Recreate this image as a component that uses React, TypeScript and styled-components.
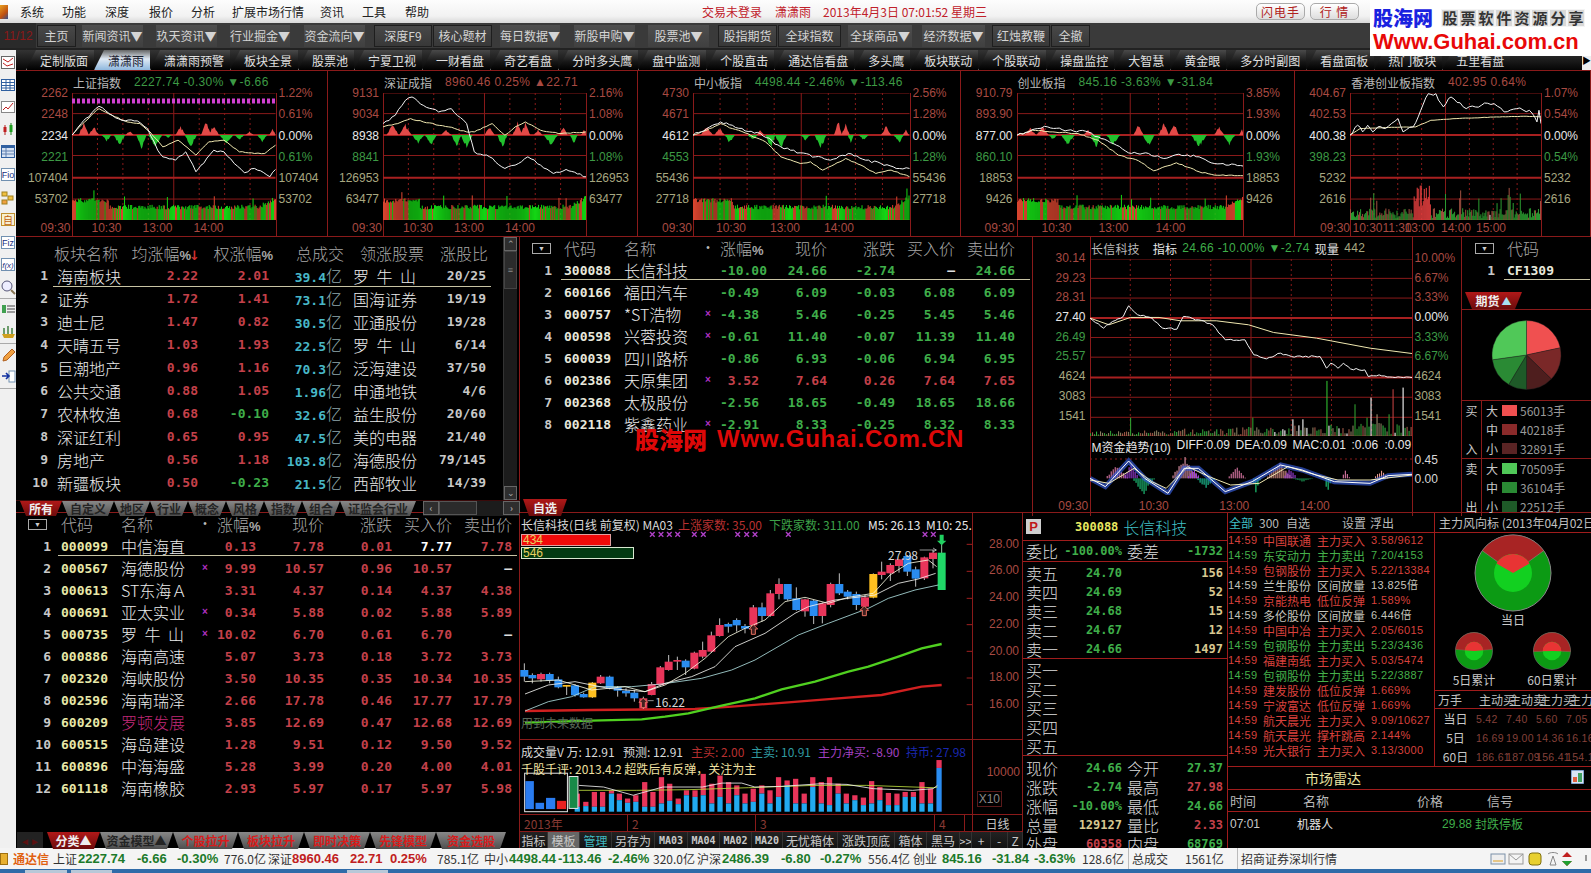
import React from 'react';
import styled, { createGlobalStyle } from 'styled-components';

const SANS = `"Liberation Sans","Noto Sans CJK SC",sans-serif`;
const MONO = `"DejaVu Sans Mono","Noto Sans CJK SC",monospace`;
const CJK = `"Noto Sans CJK SC","Liberation Sans",sans-serif`;
const LINE = '#8a1a1a';
const RED = '#c4404a';
const GREEN = '#3fae4a';
const DIMRED = '#a84a42';
const BEIGE = '#a8a880';

type P = [number, number];

function rng(seed: number) {
  let s = seed >>> 0;
  return () => {
    s = (s + 0x6d2b79f5) >>> 0;
    let t = Math.imul(s ^ (s >>> 15), 1 | s);
    t = (t + Math.imul(t ^ (t >>> 7), 61 | t)) ^ t;
    return ((t ^ (t >>> 14)) >>> 0) / 4294967296;
  };
}
const jag = (pts: P[], seed: number, amp: number, step = 6): P[] => {
  const r = rng(seed);
  const out: P[] = [];
  for (let i = 0; i < pts.length - 1; i++) {
    const [x0, y0] = pts[i];
    const [x1, y1] = pts[i + 1];
    const n = Math.max(1, Math.round((x1 - x0) / step));
    for (let k = 0; k < n; k++) {
      const t = k / n;
      out.push([x0 + (x1 - x0) * t, y0 + (y1 - y0) * t + (k ? (r() - 0.5) * amp : 0)]);
    }
  }
  out.push(pts[pts.length - 1]);
  return out;
};
const ptStr = (pts: P[]) => pts.map(p => `${p[0].toFixed(1)},${p[1].toFixed(1)}`).join(' ');
const polar = (cx: number, cy: number, r: number, a: number): P => {
  const t = ((a - 90) * Math.PI) / 180;
  return [cx + r * Math.cos(t), cy + r * Math.sin(t)];
};
const sector = (cx: number, cy: number, r: number, a0: number, a1: number) => {
  const [x0, y0] = polar(cx, cy, r, a0);
  const [x1, y1] = polar(cx, cy, r, a1);
  return `M${cx} ${cy}L${x0.toFixed(2)} ${y0.toFixed(2)}A${r} ${r} 0 ${a1 - a0 > 180 ? 1 : 0} 1 ${x1.toFixed(2)} ${y1.toFixed(2)}Z`;
};

const Global = createGlobalStyle`
  html, body { margin: 0; padding: 0; background: #000; }
  body { font-family: ${SANS}; overflow: hidden; }
  * { box-sizing: border-box; }
`;

const Root = styled.div`
  position: relative;
  width: 1591px;
  height: 873px;
  overflow: hidden;
  display: flex;
  flex-direction: column;
  background: #000;
`;

/* ---------- top bars ---------- */
const MenuBar = styled.div`
  height: 23px;
  display: flex;
  align-items: center;
  background: linear-gradient(#fdfdfd, #f2f2f2 70%, #d8d8d8);
  font-family: ${CJK};
  font-size: 12px;
  color: #222;
`;
const MenuLogo = styled.span`
  width: 8px;
  height: 14px;
  margin-right: 12px;
  background: linear-gradient(135deg, #e8a020, #c05010 60%, #305090);
`;
const MenuItem = styled.span<{ $w: number }>`
  width: ${p => p.$w}px;
  flex: none;
  white-space: nowrap;
`;
const MenuInfo = styled.span<{ $w: number }>`
  width: ${p => p.$w}px;
  flex: none;
  color: #c0202a;
  white-space: nowrap;
`;
const MenuButton = styled.span`
  width: 49px;
  height: 17px;
  margin-right: 5px;
  flex: none;
  display: flex;
  align-items: center;
  justify-content: center;
  letter-spacing: 1px;
  color: #b02020;
  background: linear-gradient(#fff, #ddd);
  border: 1px solid #aaa;
  border-radius: 5px;
  font-size: 12px;
`;

const ToolBar = styled.div`
  height: 27px;
  display: flex;
  align-items: center;
  background: #3a3a3a;
  border-bottom: 2px solid #222;
  font-family: ${CJK};
  font-size: 12px;
`;
const Pager = styled.span`
  width: 36px;
  height: 25px;
  flex: none;
  display: flex;
  align-items: center;
  justify-content: center;
  background: #2a2a2a;
  color: #8c1818;
  font-family: ${SANS};
`;
const ToolButton = styled.span<{ $w: number; $ml: number; $box?: boolean }>`
  width: ${p => p.$w}px;
  margin-left: ${p => p.$ml}px;
  height: 22px;
  flex: none;
  display: flex;
  align-items: center;
  justify-content: center;
  white-space: nowrap;
  color: #d4d4d4;
  background: ${p => (p.$box ? 'linear-gradient(#484848,#383838)' : 'linear-gradient(#4e4e4e,#404040)')};
  border: ${p => (p.$box ? '1px solid #1e1e1e' : '0')};
`;

const Body = styled.div`
  flex: 1;
  min-height: 0;
  display: flex;
`;
const SideBar = styled.div`
  width: 16px;
  flex: none;
  padding-top: 1px;
  display: flex;
  flex-direction: column;
  overflow: hidden;
  background: #f0f0f0;
`;
const SideIcon = styled.div<{ $rule?: boolean }>`
  height: 22.55px;
  flex: none;
  display: flex;
  align-items: center;
  justify-content: flex-end;
  border-bottom: ${p => (p.$rule ? '1px solid #aaa' : '0')};
`;
const Content = styled.div`
  flex: 1;
  min-width: 0;
  display: flex;
  flex-direction: column;
`;
const TabBar = styled.div`
  height: 21px;
  flex: none;
  display: flex;
  align-items: stretch;
  background: linear-gradient(#333, #050505);
  border-bottom: 1px solid ${LINE};
  font-family: ${CJK};
  font-size: 12px;
  padding-left: 10px;
`;
const ViewTab = styled.span<{ $on?: boolean }>`
  flex: none;
  display: flex;
  align-items: center;
  padding: 0 6px 0 13px;
  white-space: nowrap;
  color: ${p => (p.$on ? '#1a2030' : '#e0e0e0')};
  background: ${p =>
    p.$on ? 'linear-gradient(#666,#dfe9f4 45%,#8fb8de)' : 'linear-gradient(#4a4a4a,#161616 60%,#000)'};
  clip-path: polygon(10px 0, 100% 0, 100% 100%, 0 100%);
  border-left: 1px solid #999;
`;
const TabArrow = styled.span`
  margin-left: auto;
  width: 9px;
  background: #eee;
  color: #000;
  font-size: 9px;
  display: flex;
  align-items: center;
  justify-content: center;
`;

/* ---------- index charts ---------- */
const IndexRow = styled.div`
  height: 166px;
  flex: none;
  display: grid;
  grid-template-columns: 311.5px 310.5px 323px 333.5px 296.5px;
  border-bottom: 1px solid ${LINE};
`;
const IndexPanel = styled.div<{ $l: number; $w: number; $r: number }>`
  display: grid;
  grid-template-columns: ${p => p.$l}px ${p => p.$w}px ${p => p.$r}px;
  grid-template-rows: 22px 127px 1fr;
  border-right: 1px solid ${LINE};
  background:
    linear-gradient(${LINE}, ${LINE}) ${p => p.$l}px 22px / 1px 100% no-repeat,
    linear-gradient(${LINE}, ${LINE}) ${p => p.$l + p.$w}px 22px / 1px 100% no-repeat;
`;
const IndexTitle = styled.div<{ $l: number }>`
  grid-column: 1 / 4;
  padding-left: ${p => p.$l + 1}px;
  display: flex;
  align-items: center;
  gap: 13px;
  white-space: nowrap;
  overflow: hidden;
  font-size: 12px;
`;
const TitleName = styled.span`
  color: #b8b8b8;
  font-family: ${CJK};
`;
const TitleQuote = styled.span<{ $c: string }>`
  color: ${p => p.$c};
  letter-spacing: 0.35px;
`;
const Axis = styled.div<{ $right?: boolean; $h: number; $mt: number }>`
  display: flex;
  flex-direction: column;
  margin-top: ${p => p.$mt}px;
  align-items: ${p => (p.$right ? 'flex-start' : 'flex-end')};
  padding: ${p => (p.$right ? '0 0 0 3px' : '0 4px 0 0')};
  & > span { height: ${p => p.$h}px; line-height: ${p => p.$h}px; }
`;
const Tick = styled.span<{ $c: string }>`
  flex: none;
  font-size: 12px;
  color: ${p => p.$c};
  white-space: nowrap;
`;
const PlotSvg = styled.svg`
  display: block;
  width: 100%;
  height: 100%;
  overflow: hidden;
`;
const TimeRow = styled.div<{ $pl: number }>`
  grid-column: 1 / 4;
  padding-left: ${p => p.$pl}px;
  display: flex;
  align-items: center;
`;
const TimeCell = styled.span<{ $w: number }>`
  width: ${p => p.$w}px;
  flex: none;
  text-align: center;
  white-space: nowrap;
  color: ${DIMRED};
  font-size: 12px;
`;

/* ---------- middle row ---------- */
const MidRow = styled.div`
  height: 276px;
  flex: none;
  display: grid;
  grid-template-columns: 504px 513px 429px 129px;
  border-bottom: 1px solid ${LINE};
`;
const BottomRow = styled.div`
  flex: 1;
  min-height: 0;
  display: grid;
  grid-template-columns: 504px 503px 205px 363px;
`;
const SectorPanel = styled.div`
  display: grid;
  grid-template-columns: 487px 14px 3px;
  grid-template-rows: 1fr 16px;
  border-right: 1px solid ${LINE};
`;
const SectorBody = styled.div`
  padding-top: 5px;
  overflow: hidden;
`;
const sectorCols = '32px 9px 71px 70px 71px 73px 11px 77px 56px';
const SectorRowBox = styled.div<{ $sel?: boolean; $h: number }>`
  display: grid;
  grid-template-columns: ${sectorCols};
  height: ${p => p.$h}px;
  align-items: center;
  position: relative;
  &::after {
    content: '';
    display: ${p => (p.$sel ? 'block' : 'none')};
    position: absolute;
    left: 37px;
    right: 12px;
    bottom: 0;
    height: 1px;
    background: #c8c4a4;
  }
`;
const Head = styled.span<{ $left?: boolean; $span?: number; $mr?: number; $pl?: number }>`
  grid-column: span ${p => p.$span || 1};
  margin-right: ${p => p.$mr || 0}px;
  padding-left: ${p => p.$pl || 0}px;
  font-family: ${CJK};
  font-size: 16px;
  font-weight: 300;
  line-height: 1;
  color: #a8a8a8;
  text-align: ${p => (p.$left ? 'left' : 'right')};
  white-space: nowrap;
`;
const Pct = styled.span`
  font-family: ${SANS};
  font-size: 13px;
  font-weight: 700;
`;
const SortArrow = styled.span`
  font-family: "DejaVu Sans", sans-serif;
  font-size: 13px;
  font-weight: 700;
  margin-left: -2px;
  color: #d03030;
`;
const Rank = styled.span`
  font-family: ${MONO};
  font-size: 13px;
  font-weight: 700;
  line-height: 1;
  color: #c8c8c8;
  text-align: right;
`;
const Name = styled.span<{ $c?: string }>`
  font-family: ${CJK};
  font-size: 16px;
  font-weight: 300;
  line-height: 1;
  word-spacing: 4px;
  color: ${p => p.$c || '#ececec'};
  white-space: nowrap;
`;
const Num = styled.span<{ $c: string }>`
  font-family: ${MONO};
  font-size: 13px;
  font-weight: 700;
  line-height: 1;
  color: ${p => p.$c};
  text-align: right;
  white-space: nowrap;
`;
const Yi = styled.span`
  font-family: ${CJK};
  font-size: 16px;
  font-weight: 300;
  line-height: 1;
  color: #8fa8ac;
`;
const Code = styled.span<{ $c: string }>`
  font-family: ${MONO};
  font-size: 13px;
  font-weight: 700;
  line-height: 1;
  color: ${p => p.$c};
`;
const Mark = styled.span`
  font-size: 10px;
  line-height: 1;
  color: #b030c0;
  text-align: center;
  font-weight: 700;
`;
const VScroll = styled.div`
  display: flex;
  flex-direction: column;
  background: #1c1c1c;
  border-left: 1px solid #333;
`;
const ScrollBtn = styled.span<{ $w?: number; $flex?: boolean }>`
  height: 14px;
  width: ${p => (p.$w ? `${p.$w}px` : '100%')};
  flex: none;
  display: flex;
  align-items: center;
  justify-content: center;
  background: #2e2e2e;
  border: 1px solid #666;
  color: #aaa;
  font-size: 9px;
`;
const VThumb = styled.span`
  height: 38px;
  flex: none;
  background: #2b2b2b;
  border: 1px solid #444;
  color: #888;
  font-size: 9px;
  display: flex;
  align-items: center;
  justify-content: center;
`;
const PanelTabs = styled.div<{ $pl: number }>`
  grid-column: 1 / 4;
  height: 16px;
  padding-left: ${p => p.$pl}px;
  display: flex;
  align-items: stretch;
  border-top: 1px solid #3a0a0a;
  font-family: ${CJK};
  font-size: 12px;
  font-weight: 700;
`;
const PanelTab = styled.span<{ $w: number; $kind?: 'on' | 'gray' | 'redtext' }>`
  width: ${p => p.$w}px;
  flex: none;
  display: flex;
  align-items: center;
  justify-content: center;
  white-space: nowrap;
  line-height: 1;
  clip-path: polygon(0 0, 100% 0, calc(100% - 6px) 100%, 6px 100%);
  color: ${p => (p.$kind === 'on' ? '#eee' : p.$kind === 'redtext' ? '#d81c1c' : '#242424')};
  background: ${p =>
    p.$kind === 'on' ? 'linear-gradient(#b01818,#6c0c0c)' : 'linear-gradient(#888,#4e4e4e)'};
`;
const HScroll = styled.div`
  margin-left: auto;
  width: 97px;
  display: flex;
  background: #1c1c1c;
`;
const HTrack = styled.span`
  flex: 1;
  display: flex;
`;
const HThumb = styled.span`
  width: 38px;
  height: 14px;
  background: #2b2b2b;
  border: 1px solid #555;
`;

const ListPanel = styled.div`
  display: flex;
  flex-direction: column;
  min-height: 0;
  border-right: 1px solid ${LINE};
`;
const StockGrid = styled.div<{ $rank: number; $gap: number; $sel?: boolean; $line: number }>`
  display: grid;
  grid-template-columns: ${p => p.$rank}px ${p => p.$gap}px 60px 72px 24px 39px 68px 68px 60px 60px;
  height: 22px;
  flex: none;
  align-items: center;
  position: relative;
  &::after {
    content: '';
    display: ${p => (p.$sel ? 'block' : 'none')};
    position: absolute;
    left: ${p => p.$line}px;
    right: 2px;
    bottom: 1px;
    height: 1px;
    background: #c8c4a4;
  }
`;
const DropCell = styled.span<{ $pr: number }>`
  display: flex;
  justify-content: flex-end;
  padding-right: ${p => p.$pr}px;
`;
const DropBtn = styled.span`
  width: 19px;
  height: 11px;
  border: 1px solid #aaa;
  display: flex;
  align-items: center;
  justify-content: center;
  color: #ccc;
  font-size: 7px;
  line-height: 1;
`;
const Dot = styled.span`
  color: #bbb;
  font-size: 10px;
  line-height: 1;
  text-align: center;
`;
const Grow = styled.div`
  flex: 1;
`;
const ListTabs = styled.div<{ $pl: number }>`
  height: 17px;
  flex: none;
  padding-left: ${p => p.$pl}px;
  display: flex;
  align-items: stretch;
  font-family: ${CJK};
  font-size: 12px;
  font-weight: 700;
`;
const NavBtns = styled.span`
  width: 26px;
  margin-right: 4px;
  display: flex;
  align-items: center;
  justify-content: center;
  color: #5a1010;
  font-size: 10px;
  background: #222;
`;

/* ---------- day chart (right of the middle row) ---------- */
const MinutePanel = styled.div`
  display: grid;
  grid-template-columns: 56.5px 322px 1fr;
  grid-template-rows: 22px 177px 59px 1fr;
  border-right: 1px solid ${LINE};
  background:
    linear-gradient(${LINE}, ${LINE}) 56.5px 0 / 1px 100% no-repeat,
    linear-gradient(${LINE}, ${LINE}) 378.5px 0 / 1px 100% no-repeat;
`;
const MinuteHead = styled.div`
  grid-column: 1 / 4;
  padding-left: 58px;
  display: flex;
  align-items: center;
  gap: 5px;
  font-size: 12px;
  white-space: nowrap;
  letter-spacing: 0.2px;
`;
const HeadTag = styled.span<{ $c: string; $ml?: number }>`
  color: ${p => p.$c};
  margin-left: ${p => p.$ml || 0}px;
  font-family: ${CJK};
`;
const MacdCell = styled.div`
  position: relative;
`;
const MacdLabel = styled.div`
  position: absolute;
  left: 2px;
  top: 2px;
  right: 0;
  display: flex;
  color: #e8e8e8;
  font-size: 12px;
  white-space: nowrap;
  overflow: hidden;
`;
const MacdItem = styled.span<{ $w: number }>`
  width: ${p => p.$w}px;
  flex: none;
`;
const FuturesPanel = styled.div`
  display: flex;
  flex-direction: column;
`;
const FutHead = styled.div`
  height: 22px;
  flex: none;
  display: grid;
  grid-template-columns: 33px 12px 1fr;
  align-items: center;
`;
const FutRow = styled.div`
  height: 22px;
  flex: none;
  display: grid;
  grid-template-columns: 33px 12px 1fr;
  align-items: center;
  position: relative;
  &::after {
    content: '';
    position: absolute;
    left: 42px;
    right: 1px;
    bottom: 1px;
    height: 1px;
    background: #c8c4a4;
  }
`;
const FutTabRow = styled.div`
  margin-top: 11px;
  height: 18px;
  flex: none;
  padding-left: 3px;
  display: flex;
  border-bottom: 1px solid ${LINE};
`;
const FutTab = styled.span`
  width: 57px;
  display: flex;
  align-items: center;
  justify-content: center;
  gap: 2px;
  font-family: ${CJK};
  font-size: 12px;
  font-weight: 700;
  color: #eee;
  background: linear-gradient(#b01818, #6c0c0c);
  clip-path: polygon(0 0, 100% 0, calc(100% - 7px) 100%, 7px 100%);
`;
const TriUp = styled.span`
  color: #a8e0f0;
  font-size: 10px;
`;
const PieBox = styled.svg`
  display: block;
  flex: none;
  width: 128px;
  height: 90px;
`;
const Legend = styled.div`
  flex: 1;
  display: grid;
  grid-template-columns: 20px 1fr;
  grid-template-rows: 57px 1fr;
  border-top: 1px solid ${LINE};
`;
const LegendSide = styled.div<{ $top?: boolean }>`
  border-right: 1px solid ${LINE};
  border-top: ${p => (p.$top ? `1px solid ${LINE}` : '0')};
  display: flex;
  flex-direction: column;
  justify-content: space-between;
  align-items: center;
  padding: 1px 0;
  font-family: ${CJK};
  font-size: 12px;
  color: #c8c8c8;
`;
const LegendRows = styled.div<{ $top?: boolean }>`
  border-top: ${p => (p.$top ? `1px solid ${LINE}` : '0')};
  display: flex;
  flex-direction: column;
  justify-content: space-around;
`;
const LegendRow = styled.div`
  display: flex;
  align-items: center;
  height: 19px;
  font-family: ${CJK};
  font-size: 12px;
  color: #c8c8c8;
  white-space: nowrap;
`;
const LegendKey = styled.span`
  width: 20px;
  text-align: center;
`;
const Swatch = styled.span<{ $c: string }>`
  width: 15px;
  height: 11px;
  margin-right: 3px;
  background: ${p => p.$c};
  flex: none;
`;
const LegendVal = styled.span`
  color: #999;
`;

/* ---------- k-line ---------- */
const KPanel = styled.div`
  display: grid;
  grid-template-columns: 452px 1fr;
  grid-template-rows: 226px 75px 17px 1fr;
  border-right: 1px solid ${LINE};
`;
const KCell = styled.div<{ $line?: boolean }>`
  position: relative;
  min-width: 0;
  overflow: hidden;
  border-top: ${p => (p.$line ? `1px solid ${LINE}` : '0')};
`;
const SideCell = styled.div<{ $line?: boolean }>`
  border-left: 1px solid ${LINE};
  border-top: ${p => (p.$line ? `1px solid ${LINE}` : '0')};
  overflow: hidden;
`;
const KHead = styled.div`
  position: absolute;
  left: 1px;
  top: 1px;
  right: 0;
  height: 20px;
  display: flex;
  align-items: center;
  overflow: hidden;
  font-size: 12px;
  white-space: nowrap;
`;
const KHeadItem = styled.span<{ $w?: number; $c: string }>`
  flex: none;
  width: ${p => (p.$w ? `${p.$w}px` : 'auto')};
  color: ${p => p.$c};
  font-family: ${CJK};
  font-size: 12px;
`;
const Meter = styled.div<{ $w: number; $bg: string; $c: string; $top: number }>`
  position: absolute;
  left: 1px;
  top: ${p => p.$top}px;
  width: ${p => p.$w}px;
  height: 12px;
  border: 1px solid ${p => p.$c};
  background: ${p => p.$bg};
  color: #e8d060;
  font-size: 12px;
  line-height: 11px;
  padding-left: 1px;
`;
const ChartNote = styled.span<{ $l: number; $t: number; $c: string }>`
  position: absolute;
  left: ${p => p.$l}px;
  top: ${p => p.$t}px;
  color: ${p => p.$c};
  font-size: 12px;
  font-family: ${CJK};
  white-space: nowrap;
`;
const PriceAxis = styled.div`
  padding-top: 17.5px;
  display: flex;
  flex-direction: column;
  align-items: flex-end;
  padding-right: 3px;
  & > span { height: 26.8px; line-height: 26.8px; }
`;
const VolAxis = styled.div`
  position: relative;
  padding: 25px 2px 0 0;
  display: flex;
  flex-direction: column;
  align-items: flex-end;
`;
const X10 = styled.span`
  margin-top: 12px;
  margin-right: 18px;
  border: 1px solid #5a1a1a;
  padding: 0 1px;
  color: #888;
  font-size: 12px;
`;
const DateCell = styled.div`
  grid-column: 1 / 2;
  display: flex;
  align-items: center;
  border-top: 1px solid ${LINE};
  color: #8a3a34;
  font-size: 13px;
`;
const DateItem = styled.span<{ $w: number }>`
  width: ${p => p.$w}px;
  flex: none;
  padding-left: 4px;
  border-right: 1px solid ${LINE};
  font-family: ${CJK};
  font-size: 12px;
  height: 100%;
  display: flex;
  align-items: center;
`;
const DayTag = styled.div`
  border-left: 1px solid ${LINE};
  border-top: 1px solid ${LINE};
  display: flex;
  align-items: center;
  justify-content: center;
  color: #c8c8c8;
  font-family: ${CJK};
  font-size: 12px;
`;
const KButtons = styled.div`
  grid-column: 1 / 3;
  display: flex;
  border-top: 1px solid ${LINE};
`;
const KButton = styled.span<{ $w: number; $kind?: 'on' | 'cyan' | 'ma' }>`
  width: ${p => p.$w}px;
  flex: none;
  display: flex;
  align-items: center;
  justify-content: center;
  white-space: nowrap;
  overflow: hidden;
  border-right: 1px solid #333;
  font-family: ${p => (p.$kind === 'ma' ? MONO : CJK)};
  font-size: ${p => (p.$kind === 'ma' ? '10px' : '12px')};
  font-weight: ${p => (p.$kind === 'ma' ? 700 : 400)};
  color: ${p => (p.$kind === 'cyan' ? '#40b8c0' : '#c8c8c8')};
  background: ${p => (p.$kind === 'on' ? '#666' : 'linear-gradient(#222,#111)')};
`;

/* ---------- quote ---------- */
const QuotePanel = styled.div`
  display: flex;
  flex-direction: column;
  overflow: hidden;
  border-right: 1px solid #a01c1c;
`;
const QuoteTop = styled.div`
  height: 28px;
  flex: none;
  padding-left: 3px;
  display: flex;
  align-items: center;
  border-bottom: 1px solid #a01c1c;
`;
const PBadge = styled.span`
  width: 15px;
  height: 15px;
  margin-right: 34px;
  background: #cfcfcf;
  color: #c01818;
  font-weight: 700;
  font-size: 13px;
  display: flex;
  align-items: center;
  justify-content: center;
`;
const QuoteName = styled.span`
  margin-left: 5px;
  color: #40c0c8;
  font-family: ${CJK};
  font-size: 16px;
  font-weight: 300;
`;
const QuoteGroup = styled.div<{ $h?: number; $line?: boolean; $pt?: number }>`
  flex: none;
  padding-top: ${p => p.$pt || 0}px;
  height: ${p => (p.$h ? `${p.$h}px` : 'auto')};
  border-bottom: ${p => (p.$line ? '1px solid #a01c1c' : '0')};
`;
const QuoteRow = styled.div<{ $h?: number }>`
  height: ${p => p.$h || 19}px;
  padding-left: 3px;
  display: grid;
  grid-template-columns: 96px 96px;
  column-gap: 5px;
  align-items: center;
`;
const QuoteCell = styled.span`
  display: flex;
  justify-content: space-between;
  align-items: center;
  white-space: nowrap;
`;
const QuoteValue = styled.span<{ $c: string }>`
  font-family: ${MONO};
  font-size: 12px;
  font-weight: 700;
  line-height: 1;
  color: ${p => p.$c};
`;
const QuoteLabel = styled.span`
  font-family: ${CJK};
  font-size: 16px;
  font-weight: 300;
  line-height: 1;
  color: #dedede;
`;

/* ---------- right block ---------- */
const RightBlock = styled.div`
  display: grid;
  grid-template-columns: 207px 156px;
  grid-template-rows: 254px 1fr;
  min-height: 0;
`;
const TickerPanel = styled.div`
  border-right: 1px solid #a01c1c;
  border-bottom: 1px solid #a01c1c;
  overflow: hidden;
`;
const TickerHead = styled.div`
  height: 20px;
  display: flex;
  align-items: center;
  border-bottom: 1px solid #a01c1c;
  padding-left: 1px;
  font-family: ${CJK};
  font-size: 12px;
  color: #b8b8b8;
`;
const HeadItem = styled.span<{ $w: number; $c?: string }>`
  width: ${p => p.$w}px;
  flex: none;
  color: ${p => p.$c || 'inherit'};
`;
const TickerRow = styled.div<{ $c: string }>`
  height: 15px;
  display: grid;
  grid-template-columns: 35px 54px 54px 1fr;
  align-items: center;
  color: ${p => p.$c};
  font-size: 12px;
  white-space: nowrap;
  overflow: hidden;
`;
const TickNum = styled.span`
  font-size: 11px;
  line-height: 15px;
  letter-spacing: 0.4px;
  font-family: ${SANS};
`;
const TickName = styled.span`
  font-family: ${CJK};
  font-size: 12px;
  line-height: 15px;
`;
const WindPanel = styled.div`
  border-bottom: 1px solid #a01c1c;
  display: flex;
  flex-direction: column;
  overflow: hidden;
`;
const WindTitle = styled.div`
  height: 20px;
  flex: none;
  border-bottom: 1px solid #a01c1c;
  padding-left: 4px;
  font-family: ${CJK};
  font-size: 12px;
  color: #c0c0c0;
  white-space: nowrap;
  overflow: hidden;
  display: flex;
  align-items: center;
`;
const GaugeBig = styled.svg`
  display: block;
  flex: none;
  width: 78px;
  height: 78px;
  margin: 1px auto 0;
`;
const GaugeLabel = styled.div`
  height: 16px;
  flex: none;
  font-family: ${CJK};
  font-size: 12px;
  color: #c8c8c8;
  text-align: center;
  line-height: 16px;
`;
const SmallGauges = styled.div`
  margin-top: 4px;
  flex: none;
  display: grid;
  grid-template-columns: 78px 78px;
  row-gap: 2px;
`;
const GaugeSmall = styled.svg`
  display: block;
  width: 38px;
  height: 38px;
  margin: 0 auto;
`;
const FlowHead = styled.div`
  margin-top: 2px;
  height: 19px;
  flex: none;
  border-top: 1px solid #a01c1c;
  border-bottom: 1px solid #a01c1c;
  display: grid;
  grid-template-columns: 41px 30px 30px 30px 25px;
  align-items: center;
  padding-left: 3px;
  font-family: ${CJK};
  font-size: 12px;
  line-height: 1;
  color: #c0c0c0;
  white-space: nowrap;
  overflow: hidden;
`;
const FlowRow = styled.div`
  height: 19px;
  flex: none;
  display: grid;
  grid-template-columns: 41px 30px 30px 30px 25px;
  align-items: center;
  white-space: nowrap;
  overflow: hidden;
`;
const FlowLabel = styled.span`
  font-family: ${CJK};
  font-size: 12px;
  line-height: 1;
  color: #c8c8c8;
  text-align: center;
`;
const FlowNum = styled.span`
  font-size: 10.5px;
  letter-spacing: 0.3px;
  color: #84403a;
`;
const RadarPanel = styled.div`
  grid-column: 1 / 3;
  display: flex;
  flex-direction: column;
  overflow: hidden;
`;
const RadarTitle = styled.div`
  height: 23px;
  flex: none;
  position: relative;
  padding-left: 77px;
  display: flex;
  align-items: center;
  border-bottom: 1px solid #a01c1c;
  color: #e8e0a0;
  font-family: ${CJK};
  font-size: 14px;
`;
const RadarIcon = styled.svg`
  position: absolute;
  right: 7px;
  top: 3px;
  width: 13px;
  height: 14px;
`;
const RadarHead = styled.div`
  height: 22px;
  flex: none;
  display: flex;
  align-items: center;
  border-bottom: 1px solid #a01c1c;
  font-family: ${CJK};
  font-size: 13px;
  color: #b8b8b8;
  padding-left: 2px;
`;
const RadarRow = styled.div`
  height: 24px;
  flex: none;
  display: flex;
  align-items: center;
  padding-left: 2px;
  font-size: 12px;
  white-space: nowrap;
`;

/* ---------- status ---------- */
const StatusBar = styled.div`
  height: 21px;
  flex: none;
  display: flex;
  align-items: center;
  background: #f4f4f4;
  font-size: 13px;
  color: #333;
`;
const StatusItem = styled.span<{ $w: number; $kind?: string; $sep?: boolean }>`
  width: ${p => p.$w}px;
  flex: none;
  white-space: nowrap;
  height: 100%;
  display: flex;
  align-items: center;
  overflow: hidden;
  font-family: ${CJK};
  font-size: 12px;
  border-left: ${p => (p.$sep ? '1px solid #bbb' : '0')};
  padding-left: ${p => (p.$sep ? '3px' : '0')};
  ${p =>
    p.$kind === 'g' || p.$kind === 'r'
      ? `font-family:${SANS};font-weight:700;font-size:13px;color:${p.$kind === 'g' ? '#1c7a2a' : '#c02020'};`
      : ''}
  ${p => (p.$kind === 'brand' ? 'font-weight:700;font-size:12px;color:#e06010;' : '')}
`;
const StatusIcon = styled.span`
  width: 8px;
  height: 12px;
  margin-right: 5px;
  flex: none;
  background: #e8b030;
  border: 1px solid #a07010;
`;
const StatusTray = styled.svg`
  flex: none;
  width: 101px;
  height: 18px;
  margin-left: auto;
`;
const TaskStrip = styled.div`
  height: 4px;
  flex: none;
  display: flex;
  align-items: flex-end;
  background: #2f6ba8;
`;
const TaskItem = styled.span<{ $w: number; $ml: number }>`
  width: ${p => p.$w}px;
  margin-left: ${p => p.$ml}px;
  height: 3px;
  flex: none;
  background: #b8c8d8;
`;

/* ---------- overlays ---------- */
const Watermark = styled.div`
  position: absolute;
  left: 635px;
  top: 424px;
  display: flex;
  align-items: center;
  gap: 10px;
  color: #dd0808;
  font-weight: 700;
  font-size: 24px;
  letter-spacing: 0.75px;
  white-space: nowrap;
  font-family: ${SANS};
  line-height: 30px;
`;
const WaterCn = styled.span`
  font-family: ${CJK};
  font-weight: 900;
  letter-spacing: 0;
`;
const LogoBox = styled.div`
  position: absolute;
  right: 0;
  top: 0;
  width: 221px;
  height: 56px;
  padding: 5px 0 0 3px;
  background: #fff;
  display: flex;
  flex-direction: column;
`;
const LogoTop = styled.div`
  display: flex;
  align-items: center;
  gap: 8px;
  height: 25px;
`;
const LogoName = styled.span`
  color: #1a22e0;
  font-family: ${CJK};
  font-weight: 900;
  font-size: 20px;
  line-height: 24px;
`;
const LogoTags = styled.span`
  display: flex;
`;
const LogoTag = styled.span`
  width: 18px;
  height: 18px;
  background: #d8d8d8;
  border: 1px solid #f4f4f4;
  color: #333;
  font-family: ${CJK};
  font-weight: 700;
  font-size: 15px;
  line-height: 1;
  display: flex;
  align-items: center;
  justify-content: center;
`;
const LogoUrl = styled.span`
  color: #e80808;
  font-weight: 700;
  font-size: 22px;
  line-height: 24px;
  white-space: nowrap;
`;

/* ---------- data ---------- */
const ICOL = { up: '#a84a42', mid: '#e8e8e8', down: '#3d9a45', vol: BEIGE };

type Bump = [number, number, number];
type IndexCfg = {
  title: string; quote: string; qc: string; left: string[]; right: string[];
  vb: [number, number]; cols: [number, number, number]; tp: number; tw: number;
  times?: [string, number][]; bumps: Bump[]; a: P[]; b: P[]; seed: number; sparse?: boolean;
};
const t4 = (w: number): [string, number][] => ['09:30', '10:30', '13:00', '14:00'].map(t => [t, w] as [string, number]);

const indices: IndexCfg[] = [
  {
    title: '上证指数', quote: '2227.74 -0.30% ▼-6.66', qc: '#3d9a45',
    left: ['2262', '2248', '2234', '2221', '107404', '53702'], right: ['1.22%', '0.61%', '0.00%', '0.61%', '107404', '53702'],
    vb: [142, 399], cols: [56, 203.5, 51], tp: 14, tw: 51, seed: 11,
    bumps: [[165, 10, 35], [185, 10, 25], [210, 10, -20], [235, 12, -30], [255, 8, 12], [278, 10, -40], [305, 14, -35], [330, 8, -10], [355, 10, 25], [375, 12, -35], [405, 10, 40], [420, 10, 30], [445, 14, -25], [470, 10, -15], [490, 8, 10], [515, 10, -20], [535, 6, 20]],
    a: [[142, 405], [160, 370], [175, 350], [195, 318], [215, 340], [240, 360], [270, 362], [290, 385], [310, 450], [320, 470], [345, 480], [365, 455], [385, 515], [400, 490], [420, 450], [440, 455], [460, 490], [480, 518], [500, 505], [530, 530], [541, 508]],
    b: [[142, 405], [160, 375], [180, 345], [195, 325], [220, 345], [250, 365], [275, 370], [295, 395], [320, 440], [350, 420], [385, 465], [410, 425], [440, 420], [470, 455], [500, 460], [520, 460], [541, 435]],
  },
  {
    title: '深证成指', quote: '8960.46 0.25% ▲22.71', qc: '#a84a42',
    left: ['9131', '9034', '8938', '8841', '126953', '63477'], right: ['2.16%', '1.08%', '0.00%', '1.08%', '126953', '63477'],
    vb: [751, 398], cols: [55.5, 203, 51], tp: 14, tw: 51, seed: 22,
    bumps: [[770, 12, 30], [795, 12, 30], [820, 12, -25], [845, 12, -30], [875, 10, 15], [895, 10, -35], [915, 12, -40], [960, 10, 25], [985, 10, -40], [1015, 10, 40], [1030, 10, 35], [1055, 8, 15], [1080, 14, -30], [1105, 8, 25], [1125, 8, -25], [1145, 6, 15]],
    a: [[751, 370], [775, 345], [795, 300], [808, 290], [830, 315], [860, 335], [885, 325], [915, 370], [930, 455], [960, 470], [990, 505], [1010, 495], [1035, 470], [1060, 495], [1085, 520], [1110, 508], [1149, 530]],
    b: [[751, 380], [780, 370], [805, 355], [830, 365], [880, 380], [915, 395], [930, 395], [965, 370], [990, 405], [1010, 380], [1030, 365], [1060, 390], [1100, 400], [1149, 395]],
  },
  {
    title: '中小板指', quote: '4498.44 -2.46% ▼-113.46', qc: '#3d9a45',
    left: ['4730', '4671', '4612', '4553', '55436', '27718'], right: ['2.56%', '1.28%', '0.00%', '1.28%', '55436', '27718'],
    vb: [1358, 424], cols: [55, 216.5, 50.5], tp: 12, tw: 54, seed: 33,
    bumps: [[1385, 12, 25], [1410, 10, 20], [1430, 10, -25], [1475, 10, -15], [1490, 8, 15], [1510, 10, -40], [1530, 12, -40], [1578, 10, -15], [1608, 12, -40], [1642, 8, 45], [1657, 8, 35], [1667, 6, -25], [1692, 10, -15], [1736, 10, 25], [1761, 10, -25], [1775, 6, 15]],
    a: [[1358, 405], [1385, 385], [1412, 365], [1435, 375], [1460, 392], [1490, 400], [1530, 440], [1568, 458], [1598, 470], [1627, 480], [1662, 460], [1696, 480], [1726, 490], [1756, 505], [1782, 505]],
    b: [[1358, 405], [1385, 390], [1412, 370], [1435, 385], [1460, 398], [1500, 425], [1530, 470], [1568, 490], [1588, 485], [1612, 510], [1657, 475], [1687, 495], [1716, 520], [1746, 510], [1782, 530]],
  },
  {
    title: '创业板指', quote: '845.16 -3.63% ▼-31.84', qc: '#3d9a45',
    left: ['910.79', '893.90', '877.00', '860.10', '18853', '9426'], right: ['3.85%', '1.93%', '0.00%', '1.93%', '18853', '9426'],
    vb: [429, 449], cols: [55.5, 226.5, 51], tp: 10, tw: 57, seed: 44,
    bumps: [[455, 12, 20], [480, 12, 25], [500, 8, -15], [530, 14, -30], [570, 10, 15], [585, 10, -40], [620, 14, -30], [670, 10, 30], [690, 12, -35], [720, 10, 35], [740, 10, 35], [790, 16, -35], [830, 10, 25], [850, 12, -30], [875, 6, 15]],
    a: [[429, 405], [470, 385], [490, 380], [530, 390], [570, 395], [590, 410], [620, 430], [650, 458], [690, 460], [720, 475], [750, 462], [790, 470], [820, 490], [878, 498]],
    b: [[429, 405], [460, 390], [500, 395], [550, 400], [590, 420], [630, 465], [670, 482], [700, 512], [745, 488], [790, 515], [820, 525], [878, 527]],
  },
  {
    title: '香港创业板指数', quote: '402.95 0.64%', qc: '#a84a42',
    left: ['404.67', '402.53', '400.38', '398.23', '5232', '2616'], right: ['1.07%', '0.54%', '0.00%', '0.54%', '5232', '2616'],
    vb: [1090, 378], cols: [55.5, 191, 50], tp: 23, tw: 35, seed: 55, sparse: true,
    times: [['09:30', 35], ['10:30', 30], ['11:30', 18], ['13:00', 38], ['14:00', 35], ['15:00', 35]],
    bumps: [],
    a: [[1090, 405], [1105, 375], [1115, 395], [1125, 375], [1135, 395], [1145, 380], [1160, 385], [1185, 355], [1195, 395], [1215, 380], [1230, 330], [1245, 280], [1260, 280], [1275, 320], [1290, 290], [1320, 325], [1350, 315], [1375, 310], [1395, 335], [1420, 325], [1445, 330], [1460, 365], [1464, 330], [1468, 370]],
    b: [[1090, 405], [1110, 385], [1160, 382], [1220, 380], [1250, 360], [1300, 355], [1380, 350], [1440, 348], [1468, 350]],
  },
];

const IndexPlot: React.FC<{ c: IndexCfg }> = ({ c }) => {
  const [x0, w] = c.vb;
  const r = rng(c.seed);
  const ys = [278, 340, 404, 466, 533, 597, 660];
  const vols: React.ReactNode[] = [];
  let green = false;
  for (let x = x0, i = 0; x < x0 + w; x += 2, i++) {
    const t = (x - x0) / w;
    if (r() < 0.18) green = !green;
    let h: number;
    let col: string;
    if (c.sparse) {
      h = 6 + r() * 30;
      if (r() < 0.06) h = 50 + r() * 50;
      if (t > 0.33 && t < 0.42) { h = 40 + r() * 70; col = '#e84040'; } else col = r() < 0.6 ? '#2a9a30' : r() < 0.8 ? '#a05040' : t > 0.4 && r() < 0.3 ? '#e8e8e8' : '#2a9a30';
    } else {
      h = 32 + r() * 14 + (t < 0.18 ? 20 : 0) + (t > 0.92 ? 30 * ((t - 0.92) / 0.08) : 0);
      if (r() < 0.02) h += 30;
      const reddish = t < 0.18 ? 0.75 : t > 0.9 ? 0.7 : 0.28;
      col = (green ? r() > reddish + 0.2 : r() < reddish + 0.15) ? '#d8452f' : '#14d414';
      if (green && t > 0.25 && t < 0.9) col = '#14d414';
    }
    vols.push(<rect key={i} x={x} y={660 - h} width={2} height={h} fill={col} />);
  }
  const bumpPolys = c.bumps.map((b, i) => {
    const [cx, hw, h] = b;
    const pts: P[] = [[cx - hw, 404]];
    for (let k = -hw + 2; k < hw; k += 2) {
      const e = 1 - Math.abs(k) / hw;
      pts.push([cx + k, 404 - h * e * (0.7 + r() * 0.45)]);
    }
    pts.push([cx + hw, 404]);
    return <polygon key={i} points={ptStr(pts)} fill={h > 0 ? '#e24a48' : '#22c02e'} />;
  });
  return (
    <PlotSvg viewBox={`${x0} 278 ${w} 382`} preserveAspectRatio="none">
      {[1, 2, 3, 5, 6, 7].map(k => (
        <line key={k} x1={x0 + (w * k) / 8} x2={x0 + (w * k) / 8} y1={278} y2={660} stroke={LINE} strokeDasharray="2 3" vectorEffect="non-scaling-stroke" />
      ))}
      <line x1={x0 + w / 2} x2={x0 + w / 2} y1={278} y2={660} stroke={LINE} vectorEffect="non-scaling-stroke" />
      {ys.map((y, i) => (
        <line key={y} x1={x0} x2={x0 + w} y1={y} y2={y} stroke={i === 2 || i === 4 ? '#a82020' : LINE} strokeWidth={i === 2 || i === 4 ? 2 : 1} vectorEffect="non-scaling-stroke" />
      ))}
      {bumpPolys}
      {c.seed === 11 && (
        <line x1={142} x2={541} y1={302} y2={302} stroke="#d040d0" strokeWidth={5} strokeDasharray="3 2" vectorEffect="non-scaling-stroke" />
      )}
      {vols}
      <polyline points={ptStr(jag(c.b, c.seed + 1, c.sparse ? 1 : 3))} fill="none" stroke="#f0e8b0" vectorEffect="non-scaling-stroke" />
      <polyline points={ptStr(jag(c.a, c.seed + 2, c.sparse ? 12 : 7))} fill="none" stroke="#f4f4f4" vectorEffect="non-scaling-stroke" />
    </PlotSvg>
  );
};

const tickColor = (i: number) => (i < 2 ? ICOL.up : i === 2 ? ICOL.mid : i === 3 ? ICOL.down : ICOL.vol);

const IndexCard: React.FC<{ c: IndexCfg }> = ({ c }) => (
  <IndexPanel $l={c.cols[0]} $w={c.cols[1]} $r={c.cols[2]}>
    <IndexTitle $l={c.cols[0]}>
      <TitleName>{c.title}</TitleName>
      <TitleQuote $c={c.qc}>{c.quote}</TitleQuote>
    </IndexTitle>
    <Axis $h={21.3} $mt={-10}>
      {c.left.map((t, i) => <Tick key={i} $c={tickColor(i)}>{t}</Tick>)}
    </Axis>
    <IndexPlot c={c} />
    <Axis $right $h={21.3} $mt={-10}>
      {c.right.map((t, i) => <Tick key={i} $c={tickColor(i)}>{t}</Tick>)}
    </Axis>
    <TimeRow $pl={c.tp}>
      {(c.times || t4(c.tw)).map(([t, w]) => <TimeCell key={t} $w={w}>{t}</TimeCell>)}
    </TimeRow>
  </IndexPanel>
);

const sectors = [
  ['海南板块', '2.22', '2.01', '39.4', '罗 牛 山', '20/25'],
  ['证券', '1.72', '1.41', '73.1', '国海证券', '19/19'],
  ['迪士尼', '1.47', '0.82', '30.5', '亚通股份', '19/28'],
  ['天晴五号', '1.03', '1.93', '22.5', '罗 牛 山', '6/14'],
  ['巨潮地产', '0.96', '1.16', '70.3', '泛海建设', '37/50'],
  ['公共交通', '0.88', '1.05', '1.96', '申通地铁', '4/6'],
  ['农林牧渔', '0.68', '-0.10', '32.6', '益生股份', '20/60'],
  ['深证红利', '0.65', '0.95', '47.5', '美的电器', '21/40'],
  ['房地产', '0.56', '1.18', '103.8', '海德股份', '79/145'],
  ['新疆板块', '0.50', '-0.23', '21.5', '西部牧业', '14/39'],
];
const signColor = (s: string) => (s.startsWith('-') ? GREEN : RED);

type Stock = [string, string, boolean, string, string, string, string, string];
const watch: Stock[] = [
  ['300088', '长信科技', false, '-10.00', '24.66', '-2.74', '–', '24.66'],
  ['600166', '福田汽车', false, '-0.49', '6.09', '-0.03', '6.08', '6.09'],
  ['000757', '*ST浩物', true, '-4.38', '5.46', '-0.25', '5.45', '5.46'],
  ['000598', '兴蓉投资', true, '-0.61', '11.40', '-0.07', '11.39', '11.40'],
  ['600039', '四川路桥', false, '-0.86', '6.93', '-0.06', '6.94', '6.95'],
  ['002386', '天原集团', true, '3.52', '7.64', '0.26', '7.64', '7.65'],
  ['002368', '太极股份', false, '-2.56', '18.65', '-0.49', '18.65', '18.66'],
  ['002118', '紫鑫药业', true, '-2.91', '8.33', '-0.25', '8.32', '8.33'],
];
const hainan: Stock[] = [
  ['000099', '中信海直', false, '0.13', '7.78', '0.01', '7.77', '7.78'],
  ['000567', '海德股份', true, '9.99', '10.57', '0.96', '10.57', '–'],
  ['000613', 'ST东海Ａ', false, '3.31', '4.37', '0.14', '4.37', '4.38'],
  ['000691', '亚太实业', true, '0.34', '5.88', '0.02', '5.88', '5.89'],
  ['000735', '罗 牛 山', true, '10.02', '6.70', '0.61', '6.70', '–'],
  ['000886', '海南高速', false, '5.07', '3.73', '0.18', '3.72', '3.73'],
  ['002320', '海峡股份', false, '3.50', '10.35', '0.35', '10.34', '10.35'],
  ['002596', '海南瑞泽', false, '2.66', '17.78', '0.46', '17.77', '17.79'],
  ['600209', '罗顿发展', false, '3.85', '12.69', '0.47', '12.68', '12.69'],
  ['600515', '海岛建设', false, '1.28', '9.51', '0.12', '9.50', '9.52'],
  ['600896', '中海海盛', false, '5.28', '3.99', '0.20', '4.00', '4.01'],
  ['601118', '海南橡胶', false, '2.93', '5.97', '0.17', '5.97', '5.98'],
];

const ListHead: React.FC<{ rank: number; gap: number; pr: number; line: number }> = ({ rank, gap, pr, line }) => (
  <StockGrid $rank={rank} $gap={gap} $line={line}>
    <DropCell $pr={pr}><DropBtn>▼</DropBtn></DropCell>
    <span />
    <Head $left>代码</Head>
    <Head $left>名称</Head>
    <Dot>•</Dot>
    <Head>涨幅<Pct>%</Pct></Head>
    <Head>现价</Head>
    <Head>涨跌</Head>
    <Head>买入价</Head>
    <Head>卖出价</Head>
  </StockGrid>
);
const StockList: React.FC<{ data: Stock[]; rank: number; gap: number; codeColor: string; line: number }> = ({ data, rank, gap, codeColor, line }) => (
  <>
    {data.map((s, i) => {
      const c = signColor(s[3]);
      return (
        <StockGrid key={s[0]} $rank={rank} $gap={gap} $sel={i === 0} $line={line}>
          <Rank>{i + 1}</Rank>
          <span />
          <Code $c={codeColor}>{s[0]}</Code>
          <Name $c={s[1] === '罗顿发展' ? '#c02878' : undefined}>{s[1]}</Name>
          <Mark>{s[2] ? '×' : ''}</Mark>
          <Num $c={c}>{s[3]}</Num>
          <Num $c={c}>{s[4]}</Num>
          <Num $c={c}>{s[5]}</Num>
          <Num $c={s[0] === '000099' ? '#fff' : s[6] === '–' ? '#ddd' : c}>{s[6]}</Num>
          <Num $c={s[7] === '–' ? '#ddd' : c}>{s[7]}</Num>
        </StockGrid>
      );
    })}
  </>
);

/* minute chart */
const minuteA: P[] = [[167, 250], [205, 280], [230, 260], [260, 245], [275, 213], [300, 240], [340, 250], [370, 280], [410, 283], [428, 245], [470, 255], [510, 270], [545, 315], [600, 315], [625, 360], [660, 372], [700, 355], [730, 365], [810, 365], [828, 400], [840, 385], [860, 400], [875, 385], [895, 402], [935, 405], [945, 425], [975, 420], [1020, 428], [1067, 428]];
const minuteB: P[] = [[167, 250], [220, 270], [280, 248], [360, 248], [420, 258], [520, 258], [610, 270], [680, 293], [800, 310], [950, 340], [1067, 356]];
const minuteYs = [73, 131, 190, 250, 308, 367, 428, 487, 547, 603];

const MinutePlot: React.FC = () => {
  const r = rng(77);
  const spikes: Record<number, [number, string]> = { 828: [165, '#30c030'], 950: [115, '#fff'], 1038: [145, '#fff'], 1015: [140, '#c04040'], 908: [95, '#30a030'], 280: [55, '#30a030'], 620: [55, '#30a030'], 970: [65, '#a09070'], 1004: [65, '#30a030'], 730: [50, '#fff'], 760: [50, '#fff'], 940: [55, '#30a030'] };
  const bars: React.ReactNode[] = [];
  for (let x = 167; x < 1067; x += 5.6) {
    const key = Object.keys(spikes).map(Number).find(k => Math.abs(k - x) < 2.9);
    const t = (x - 167) / 900;
    let h = 4 + r() * (10 + t * 28);
    let c = ['#2f9a35', '#a05a48', '#8a8060', '#2fb040'][Math.floor(r() * 4)];
    if (t > 0.55 && r() < 0.2) c = '#fff';
    if (key !== undefined) { h = spikes[key][0]; c = spikes[key][1]; }
    bars.push(<rect key={x} x={x} y={603 - h} width={3} height={h} fill={c} />);
  }
  return (
    <PlotSvg viewBox="167 73 900 530" preserveAspectRatio="none">
      {[1, 2, 3, 5, 6, 7].map(k => (
        <line key={k} x1={167 + 112.5 * k} x2={167 + 112.5 * k} y1={73} y2={603} stroke={LINE} strokeDasharray="2 3" vectorEffect="non-scaling-stroke" />
      ))}
      <line x1={617} x2={617} y1={73} y2={603} stroke={LINE} vectorEffect="non-scaling-stroke" />
      {minuteYs.map((y, i) => (
        <line key={y} x1={167} x2={1067} y1={y} y2={y} stroke={i === 3 || i === 6 ? '#a82020' : LINE} strokeWidth={i === 3 || i === 6 ? 2 : 1} vectorEffect="non-scaling-stroke" />
      ))}
      {bars}
      <polyline points={ptStr(minuteB)} fill="none" stroke="#f0e8b0" vectorEffect="non-scaling-stroke" />
      <polyline points={ptStr(jag(minuteA, 5, 5, 8))} fill="none" stroke="#f4f4f4" vectorEffect="non-scaling-stroke" />
    </PlotSvg>
  );
};

const macdA: P[] = [[167, 730], [210, 755], [275, 678], [320, 730], [385, 775], [430, 700], [470, 700], [545, 770], [620, 740], [700, 690], [760, 705], [850, 740], [950, 745], [1000, 722], [1067, 718]];
const macdB: P[] = [[167, 735], [220, 745], [290, 700], [340, 740], [380, 760], [440, 695], [500, 725], [560, 750], [640, 745], [720, 695], [800, 720], [860, 735], [950, 735], [1067, 720]];
const macdBumps: [number, number, number, string][] = [
  [240, 32, 40, '#e07aa8'], [280, 22, 45, '#a040e0'], [430, 38, 65, '#e89ab0'], [455, 20, 30, '#a040e0'], [575, 26, 35, '#e07aa8'], [695, 38, 45, '#e89a90'], [725, 20, 30, '#a040e0'], [880, 12, 25, '#e07aa8'], [980, 22, 25, '#e89a90'],
  [315, 32, -48, '#20d080'], [490, 28, -32, '#20d0a0'], [630, 12, -45, '#20e080'], [830, 10, -45, '#20d080'], [760, 30, -10, '#20b060'],
];
const MacdPlot: React.FC = () => {
  const r = rng(9);
  return (
    <PlotSvg viewBox="167 603 900 177" preserveAspectRatio="none">
      <line x1={167} x2={1067} y1={672} y2={672} stroke={LINE} strokeDasharray="2 3" vectorEffect="non-scaling-stroke" />
      {macdBumps.flatMap((b, i) => {
        const [cx, hw, h, c] = b;
        const out: React.ReactNode[] = [];
        for (let x = cx - hw; x < cx + hw; x += 5.6) {
          const e = 1 - Math.abs(x - cx) / hw;
          const hh = h * e * (0.75 + r() * 0.3);
          out.push(<rect key={`${i}-${x}`} x={x} y={hh > 0 ? 730 - hh : 730} width={3} height={Math.abs(hh)} fill={c} />);
        }
        return out;
      })}
      <polyline points={ptStr(macdA)} fill="none" stroke="#3860e0" strokeWidth={5} strokeOpacity={0.65} vectorEffect="non-scaling-stroke" />
      <polyline points={ptStr(macdB)} fill="none" stroke="#f0e8b0" vectorEffect="non-scaling-stroke" />
      <polyline points={ptStr(macdA)} fill="none" stroke="#fff" vectorEffect="non-scaling-stroke" />
    </PlotSvg>
  );
};

/* k-line */
type C = [number, number, number, number, number, string];
const BL = '#2a8cf0', RD = '#e8355a', YL = '#ffc020', GN = '#20d868';
const candles: C[] = [
  [28, 480, 500, 460, 515, BL], [52, 495, 505, 490, 520, BL], [78, 492, 508, 488, 515, RD], [104, 492, 512, 488, 520, BL], [130, 508, 532, 500, 535, BL], [155, 525, 530, 525, 555, YL], [180, 526, 556, 522, 560, BL], [206, 552, 562, 548, 563, BL], [232, 518, 562, 516, 564, YL], [257, 500, 520, 495, 522, RD], [284, 500, 535, 497, 538, BL], [308, 532, 542, 528, 560, BL], [333, 542, 550, 535, 560, BL], [358, 548, 565, 540, 575, BL], [385, 565, 595, 560, 597, RD], [410, 522, 555, 516, 556, RD], [436, 472, 525, 468, 526, RD], [461, 455, 480, 435, 482, RD], [487, 450, 455, 440, 480, RD], [512, 452, 472, 448, 495, BL], [538, 428, 476, 425, 478, RD], [563, 420, 440, 395, 445, RD], [589, 376, 425, 365, 428, RD], [614, 345, 378, 325, 380, RD], [640, 342, 350, 338, 368, BL], [665, 330, 346, 325, 365, BL], [690, 348, 356, 342, 370, BL], [715, 292, 346, 285, 350, RD], [741, 292, 318, 278, 335, BL], [766, 250, 318, 240, 320, RD], [792, 222, 252, 205, 268, RD], [818, 222, 268, 222, 272, BL], [844, 265, 300, 232, 302, BL], [870, 268, 304, 266, 320, RD], [896, 272, 318, 270, 342, BL], [922, 280, 318, 278, 340, RD], [947, 222, 285, 218, 292, RD], [973, 222, 250, 190, 255, BL], [998, 245, 260, 240, 268, BL], [1024, 252, 285, 245, 300, BL], [1050, 262, 290, 255, 300, RD], [1075, 192, 263, 190, 265, YL], [1100, 185, 195, 155, 208, RD], [1126, 165, 190, 160, 213, RD], [1152, 148, 168, 148, 188, RD], [1177, 138, 185, 135, 198, BL], [1202, 178, 206, 170, 230, BL], [1228, 142, 205, 140, 210, RD], [1254, 128, 147, 120, 175, RD], [1280, 128, 240, 100, 240, GN],
];
const ma5: P[] = [[30, 515], [130, 510], [230, 540], [330, 530], [390, 545], [450, 525], [510, 490], [570, 445], [640, 380], [690, 355], [750, 330], [810, 275], [870, 262], [940, 280], [1000, 262], [1075, 250], [1125, 195], [1180, 160], [1240, 150], [1265, 170]];
const ma10: P[] = [[30, 552], [100, 525], [180, 515], [280, 535], [390, 545], [450, 520], [530, 500], [600, 470], [660, 410], [750, 370], [840, 310], [880, 290], [960, 270], [1080, 255], [1150, 220], [1210, 207], [1262, 190]];
const ma20: P[] = [[30, 603], [100, 575], [170, 560], [240, 530], [350, 530], [440, 522], [560, 505], [650, 480], [720, 450], [850, 375], [940, 340], [1060, 295], [1120, 265], [1200, 240], [1270, 225]];
const maG: P[] = [[30, 638], [230, 632], [380, 628], [450, 620], [520, 610], [620, 587], [720, 565], [800, 538], [900, 515], [1000, 485], [1060, 470], [1150, 440], [1220, 415], [1280, 402]];
const maR: P[] = [[30, 603], [230, 600], [540, 597], [650, 590], [820, 577], [970, 565], [1100, 555], [1220, 530], [1280, 525]];
const marks = [412, 438, 463, 488, 538, 565, 668, 695, 720, 820, 1230, 1255];
const upArrows: P[] = [[385, 578], [715, 358], [1048, 302]];

const Candles: React.FC = () => (
  <PlotSvg viewBox="15 9 1356 678">
    <polyline points={ptStr(maR)} fill="none" stroke="#d02020" strokeWidth={7} />
    <polyline points={ptStr(maG)} fill="none" stroke="#50d020" strokeWidth={7} />
    {candles.map(([x, t, b, h, l, c]) => (
      <g key={x}>
        <line x1={x} x2={x} y1={h} y2={l} stroke={c === GN ? '#b0f0c0' : '#e8e8e8'} strokeWidth={2.5} />
        <rect x={x - 12} y={t} width={24} height={b - t} fill={c} />
      </g>
    ))}
    <polyline points={ptStr(ma20)} fill="none" stroke="#b0e0e0" strokeWidth={2.5} />
    <polyline points={ptStr(ma10)} fill="none" stroke="#f4f4f0" strokeWidth={2.5} />
    <polyline points={ptStr(ma5)} fill="none" stroke="#f8f8e0" strokeWidth={2.5} />
    {marks.map(x => (
      <g key={x} stroke="#b040c8" strokeWidth={4}>
        <line x1={x - 7} x2={x + 7} y1={66} y2={80} />
        <line x1={x + 7} x2={x - 7} y1={66} y2={80} />
      </g>
    ))}
    {upArrows.map(([x, y]) => (
      <path key={x} d={`M${x} ${y - 14}l13 13h-7v16h-12v-16h-7z`} fill="#402020" stroke="#e87060" strokeWidth={3} />
    ))}
    <path d="M1280 106l-14 -14h8v-18h12v18h8z" fill="#20d060" />
    <line x1={398} x2={416} y1={572} y2={572} stroke="#ddd" strokeWidth={2} />
    <path d="M1214 120h50l-10 -6M1264 120l-10 6" fill="none" stroke="#ddd" strokeWidth={2} />
    {[103, 184, 265, 344, 424, 504, 584].map(y => (
      <line key={y} x1={1355} x2={1371} y1={y} y2={y} stroke="#a02020" strokeWidth={3} />
    ))}
  </PlotSvg>
);

const volBars: [number, number, number][] = [
  [180, 850, 890], [206, 875, 888], [232, 845, 890], [257, 845, 890], [284, 840, 850], [308, 850, 870], [333, 865, 878], [358, 855, 875], [385, 815, 890], [410, 845, 890], [436, 800, 880], [461, 820, 872], [487, 865, 882], [512, 840, 855], [538, 840, 860], [563, 790, 855], [589, 820, 880], [614, 795, 860], [640, 815, 880], [665, 825, 855], [690, 850, 880], [715, 835, 875], [741, 825, 850], [766, 840, 880], [792, 800, 860], [818, 810, 825], [844, 805, 880], [870, 850, 880], [896, 800, 830], [922, 815, 880], [947, 800, 885], [973, 820, 850], [998, 850, 880], [1024, 855, 870], [1050, 862, 885], [1075, 812, 880], [1100, 830, 870], [1126, 848, 885], [1152, 850, 885], [1177, 845, 860], [1202, 845, 860], [1228, 815, 880], [1254, 835, 880], [1280, 748, 772],
];
const volM1: P[] = [[185, 825], [260, 830], [350, 855], [440, 830], [560, 830], [620, 818], [680, 818], [720, 830], [800, 828], [920, 820], [1000, 822], [1080, 835], [1200, 840], [1262, 835], [1275, 825]];
const volM2: P[] = [[185, 840], [360, 840], [520, 838], [700, 832], [900, 825], [1060, 825], [1262, 832], [1275, 830]];

const VolPlot: React.FC = () => (
  <PlotSvg viewBox="15 687 1356 225">
    {volBars.map(([x, t, m]) => (
      <g key={x}>
        <rect x={x - 8} y={t} width={16} height={m - t} fill={RD} />
        <rect x={x - 8} y={m} width={16} height={905 - m} fill={x === 1280 ? '#2a8cf0' : '#22aaf0'} />
      </g>
    ))}
    <polyline points={ptStr(volM2)} fill="none" stroke="#c0e040" strokeWidth={2.5} />
    <polyline points={ptStr(volM1)} fill="none" stroke="#f4f4f4" strokeWidth={2.5} />
    <rect x={20} y={788} width={130} height={117} fill="#000" stroke="#e8e8e8" strokeWidth={3} />
    <rect x={22} y={812} width={26} height={85} fill="#2a7cf0" />
    <rect x={53} y={878} width={26} height={19} fill="#2a7cf0" />
    <rect x={85} y={863} width={28} height={34} fill="#2a7cf0" />
    <rect x={118} y={872} width={28} height={25} fill="#e82020" />
    <rect x={155} y={798} width={27} height={97} fill="#188a48" stroke="#e8e8e8" strokeWidth={3} />
  </PlotSvg>
);

const GaugeArt: React.FC<{ outer: number; inner: number }> = ({ outer, inner }) => (
  <>
    <circle r={38} fill="#0c9a14" stroke="#888" strokeWidth={1} />
    <path d={sector(0, 0, 38, -outer, outer)} fill="#a82424" stroke="#888" strokeWidth={0.6} />
    <circle r={19} fill="#12d020" />
    <path d={sector(0, 0, 19, -inner, inner)} fill="#e83434" />
  </>
);

const tickers: [string, string, string, string][] = [
  ['中国联通', '主力买入', '3.58/9612', 'r'], ['东安动力', '主力卖出', '7.20/4153', 'g'], ['包钢股份', '主力买入', '5.22/13384', 'r'],
  ['兰生股份', '区间放量', '13.825倍', 'w'], ['京能热电', '低位反弹', '1.589%', 'r'], ['多伦股份', '区间放量', '6.446倍', 'w'],
  ['中国中冶', '主力买入', '2.05/6015', 'r'], ['包钢股份', '主力卖出', '5.23/3436', 'g'], ['福建南纸', '主力买入', '5.03/5474', 'r'],
  ['包钢股份', '主力卖出', '5.22/3887', 'g'], ['建发股份', '低位反弹', '1.669%', 'r'], ['宁波富达', '低位反弹', '1.669%', 'r'],
  ['航天晨光', '主力买入', '9.09/10627', 'r'], ['航天晨光', '撑杆跳高', '2.144%', 'r'], ['光大银行', '主力买入', '3.13/3000', 'r'],
];
const tickColors: Record<string, string> = { r: '#d8403c', g: '#45b04a', w: '#c4c4bc' };

const menuItems: [string, number][] = [['系统', 42], ['功能', 43], ['深度', 44], ['报价', 42], ['分析', 41], ['扩展市场行情', 88], ['资讯', 42], ['工具', 43], ['帮助', 297]];
const toolItems: [string, number, number, boolean?][] = [
  ['主页', 39, 1, true], ['新闻资讯▼', 61, 6], ['玖天资讯▼', 61, 13], ['行业掘金▼', 60, 13], ['资金流向▼', 61, 14],
  ['深度F9', 58, 9, true], ['核心题材', 59, 1, true], ['每日数据▼', 60, 8], ['新股申购▼', 61, 14], ['股票池▼', 61, 13],
  ['股指期货', 59, 9, true], ['全球指数', 63, 1, true], ['全球商品▼', 64, 7], ['经济数据▼', 63, 10], ['红烛教鞭', 58, 7, true], ['全撤', 39, 1, true],
];
const viewTabs = ['定制版面', '潇潇雨', '潇潇雨预警', '板块全景', '股票池', '宁夏卫视', '一财看盘', '奇艺看盘', '分时多头鹰', '盘中监测', '个股直击', '通达信看盘', '多头鹰', '板块联动', '个股联动', '操盘监控', '大智慧', '黄金眼', '多分时副图', '看盘面板', '热门板块', '五里看盘'];
const kButtons: [string, number, ('on' | 'cyan' | 'ma')?][] = [
  ['指标', 28], ['模板', 32, 'on'], ['管理', 32, 'cyan'], ['另存为', 43], ['MA03', 33, 'ma'], ['MA04', 32, 'ma'], ['MA02', 32, 'ma'], ['MA20', 31, 'ma'], ['无忧箱体', 55], ['涨跌顶底', 57], ['箱体', 32], ['黑马', 33], ['>>', 12], ['+', 19], ['-', 17], ['Z', 15],
];
const statusRaw: [string, number, string?, boolean?][] = [
  ['通达信', 13, 'brand'], ['上证', 53], ['2227.74', 78, 'g'], ['-6.66', 137, 'g'], ['-0.30%', 177, 'g'], ['776.0亿', 224], ['深证', 268], ['8960.46', 292, 'r'], ['22.71', 350, 'r'], ['0.25%', 390, 'r'], ['785.1亿', 437], ['中小', 484], ['4498.44', 509, 'g'], ['-113.46', 558, 'g'], ['-2.46%', 608, 'g'], ['320.0亿', 653], ['沪深', 697], ['2486.39', 722, 'g'], ['-6.80', 781, 'g'], ['-0.27%', 820, 'g'], ['556.4亿', 868], ['创业', 913], ['845.16', 942, 'g'], ['-31.84', 992, 'g'], ['-3.63%', 1034, 'g'], ['128.6亿', 1082], ['总成交', 1128, undefined, true], ['1561亿', 1185], ['招商证券深圳行情', 1237, undefined, true],
];
const legendBuy: [string, string, string][] = [['大', '#f05050', '56013手'], ['中', '#8a2a2a', '40218手'], ['小', '#5a2424', '32891手']];
const legendSell: [string, string, string][] = [['大', '#50c858', '70509手'], ['中', '#2a8a34', '36104手'], ['小', '#1e5a28', '22512手']];
const pieSlices: [number, number, string][] = [[0, 78, '#f05050'], [78, 134, '#7a2828'], [134, 180, '#4e1e1e'], [180, 211, '#1e5a28'], [211, 262, '#2a8a34'], [262, 360, '#50c858']];

const Sb: React.FC<{ children: React.ReactNode }> = ({ children }) => (
  <svg width="15" height="16" viewBox="0 0 15 16">{children}</svg>
);
const sideIcons: { el: React.ReactNode; rule?: boolean }[] = [
  { el: <Sb><rect x=".5" y="2.5" width="13" height="12" fill="#fff" stroke="#666" /><path d="M2 5l5 3 5-4M2 9l4 3 6-2" stroke="#c02020" fill="none" /></Sb> },
  { el: <Sb><rect x=".5" y="2.5" width="13" height="11" fill="#fff" stroke="#3060a0" /><path d="M1 5.5h13M1 8.5h13M1 11h13M5 3v10M9 3v10" stroke="#3060a0" /></Sb> },
  { el: <Sb><rect x=".5" y="2.5" width="13" height="11" fill="#fff" stroke="#888" /><path d="M2 11l3-3 2 2 5-6" stroke="#c02020" fill="none" /></Sb> },
  { el: <Sb><path d="M4 3v10" stroke="#b02020" /><rect x="2.5" y="5" width="3" height="5" fill="#c02020" /><path d="M10 1v12" stroke="#208020" /><rect x="8.5" y="3" width="3" height="7" fill="#20a020" /></Sb> },
  { el: <Sb><rect x=".5" y="1.5" width="13" height="12" fill="#d8e4f4" stroke="#3060a0" /><rect x="1" y="2" width="12" height="2" fill="#3060a0" /><path d="M1 7h13M1 10h13M5 4v9" stroke="#6080b0" /></Sb> },
  { el: <Sb><rect x=".5" y="1.5" width="13" height="12" fill="#fff" stroke="#7090b0" /><text x="7" y="11" fontSize="9" fontFamily="Liberation Sans" textAnchor="middle" fill="#203080">Fio</text></Sb> },
  { el: <Sb><rect x="1" y="2" width="5" height="4" fill="#f0c040" stroke="#a08020" /><rect x="7" y="6" width="5" height="4" fill="#f0c040" stroke="#a08020" /><rect x="1" y="10" width="5" height="4" fill="#f0a040" stroke="#a08020" /></Sb> },
  { el: <Sb><rect x=".5" y="1.5" width="13" height="12" fill="#f8f0d0" stroke="#c09030" /><text x="7" y="11.5" fontSize="10" fontFamily="Noto Sans CJK SC" textAnchor="middle" fill="#c06010">自</text></Sb> },
  { el: <Sb><rect x=".5" y="1.5" width="13" height="12" fill="#fff" stroke="#7090b0" /><text x="7" y="11" fontSize="9" fontFamily="Liberation Sans" textAnchor="middle" fill="#203080">Fiz</text></Sb> },
  { el: <Sb><rect x=".5" y="1.5" width="13" height="12" fill="#fff" stroke="#7090b0" /><text x="7" y="11" fontSize="8" fontFamily="Liberation Sans" fontStyle="italic" textAnchor="middle" fill="#203080">f(x)</text></Sb> },
  { el: <Sb><circle cx="6" cy="7" r="5" fill="#eef" stroke="#557" /><path d="M10 11l4 4" stroke="#875" strokeWidth="2" /></Sb>, rule: true },
  { el: <Sb><path d="M6 4h8M6 7h8M6 10h8" stroke="#444" /><rect x="1" y="3" width="4" height="8" fill="#40a050" /></Sb> },
  { el: <Sb><path d="M1 10h13l-2 4H3z" fill="#d0a020" /><path d="M3 10V4M7 10V2M11 10V4" stroke="#408040" strokeWidth="1.5" /></Sb>, rule: true },
  { el: <Sb><path d="M2 14l1-4 8-8 3 3-8 8z" fill="#f0a040" stroke="#b06020" /></Sb> },
  { el: <Sb><rect x="8" y="2" width="6" height="11" fill="#fff" stroke="#7090b0" /><path d="M1 7h7M5 4l3 3-3 3" stroke="#1030a0" strokeWidth="1.6" fill="none" /></Sb>, rule: true },
];
const kAxisLabels = ['28.00', '26.00', '24.00', '22.00', '20.00', '18.00', '16.00'];
const sectorTabs: [string, number, ('on' | 'gray')][] = [['所有', 42, 'on'], ['自定义', 52, 'gray'], ['地区', 36, 'gray'], ['行业', 38, 'gray'], ['概念', 38, 'gray'], ['风格', 38, 'gray'], ['指数', 38, 'gray'], ['组合', 38, 'gray'], ['证监会行业', 76, 'gray']];
const listTabs: [string, number, ('on' | 'gray' | 'redtext')][] = [['分类▲', 53, 'on'], ['资金模型▲', 73, 'gray'], ['个股拉升', 65, 'redtext'], ['板块拉升', 66, 'redtext'], ['即时决策', 66, 'redtext'], ['先锋模型', 66, 'redtext'], ['资金选股', 70, 'redtext']];

const quoteAsk: [string, string, string][] = [['卖五', '24.70', '156'], ['卖四', '24.69', '52'], ['卖三', '24.68', '15'], ['卖二', '24.67', '12'], ['卖一', '24.66', '1497']];
const quoteBid = ['买一', '买二', '买三', '买四', '买五'];
const quoteStats: [string, string, string, string, string, string][] = [
  ['现价', '24.66', GREEN, '今开', '27.37', GREEN], ['涨跌', '-2.74', GREEN, '最高', '27.98', RED], ['涨幅', '-10.00%', GREEN, '最低', '24.66', GREEN], ['总量', '129127', '#d8c890', '量比', '2.33', RED], ['外盘', '60358', RED, '内盘', '68769', GREEN],
];

const App: React.FC = () => {
  const status = statusRaw.map((s, i) => {
    const next = i + 1 < statusRaw.length ? statusRaw[i + 1][1] : 1490;
    return { t: s[0], w: next - s[1], k: s[2], sep: s[3] };
  });
  return (
    <Root>
      <Global />
      <MenuBar>
        <MenuLogo />
        {menuItems.map(([t, w]) => <MenuItem key={t} $w={w}>{t}</MenuItem>)}
        <MenuInfo $w={73}>交易未登录</MenuInfo>
        <MenuInfo $w={48}>潇潇雨</MenuInfo>
        <MenuInfo $w={433}>2013年4月3日 07:01:52 星期三</MenuInfo>
        <MenuButton>闪电手</MenuButton>
        <MenuButton>行 情</MenuButton>
      </MenuBar>
      <ToolBar>
        <Pager>11/12</Pager>
        {toolItems.map(([t, w, ml, box]) => <ToolButton key={t} $w={w} $ml={ml} $box={box}>{t}</ToolButton>)}
      </ToolBar>
      <Body>
        <SideBar>
          {sideIcons.map((s, i) => <SideIcon key={i} $rule={s.rule}>{s.el}</SideIcon>)}
        </SideBar>
        <Content>
          <TabBar>
            {viewTabs.map(t => <ViewTab key={t} $on={t === '潇潇雨'}>{t}</ViewTab>)}
            <TabArrow>▶</TabArrow>
          </TabBar>
          <IndexRow>
            {indices.map(c => <IndexCard key={c.title} c={c} />)}
          </IndexRow>
          <MidRow>
            <SectorPanel>
              <SectorBody>
                <SectorRowBox $h={22}>
                  <span />
                  <Head $left $span={2} $pl={6}>板块名称</Head>
                  <Head $mr={-2}>均涨幅<Pct>%</Pct><SortArrow>↓</SortArrow></Head>
                  <Head $mr={-4}>权涨幅<Pct>%</Pct></Head>
                  <Head $mr={-2}>总成交</Head>
                  <span />
                  <Head $mr={6}>领涨股票</Head>
                  <Head $mr={-2}>涨股比</Head>
                </SectorRowBox>
                {sectors.map((s, i) => (
                  <SectorRowBox key={s[0]} $h={23} $sel={i === 0}>
                    <Rank>{i + 1}</Rank>
                    <span />
                    <Name>{s[0]}</Name>
                    <Num $c={RED}>{s[1]}</Num>
                    <Num $c={signColor(s[2])}>{s[2]}</Num>
                    <Num $c="#48b8c8">{s[3]}<Yi>亿</Yi></Num>
                    <span />
                    <Name>{s[4]}</Name>
                    <Num $c="#c8c8c8">{s[5]}</Num>
                  </SectorRowBox>
                ))}
              </SectorBody>
              <VScroll>
                <ScrollBtn>⌃</ScrollBtn>
                <VThumb>≡</VThumb>
                <Grow />
                <ScrollBtn>⌄</ScrollBtn>
              </VScroll>
              <span />
              <PanelTabs $pl={4}>
                {sectorTabs.map(([t, w, k]) => <PanelTab key={t} $w={w} $kind={k}>{t}</PanelTab>)}
                <HScroll>
                  <ScrollBtn $w={16}>‹</ScrollBtn>
                  <HTrack><HThumb /></HTrack>
                  <ScrollBtn $w={17}>›</ScrollBtn>
                </HScroll>
              </PanelTabs>
            </SectorPanel>
            <ListPanel>
              <ListHead rank={32} gap={12} pr={1} line={41} />
              <StockList data={watch} rank={32} gap={12} codeColor="#e8e8dc" line={41} />
              <Grow />
              <ListTabs $pl={3}>
                <PanelTab $w={44} $kind="on">自选</PanelTab>
              </ListTabs>
            </ListPanel>
            <MinutePanel>
              <MinuteHead>
                <HeadTag $c="#b8b8b8">长信科技</HeadTag>
                <HeadTag $c="#e8e8e8" $ml={8}>指标</HeadTag>
                <TitleQuote $c={GREEN}>24.66 -10.00% ▼-2.74</TitleQuote>
                <HeadTag $c="#e0e0e0">现量</HeadTag>
                <TitleQuote $c={BEIGE}>442</TitleQuote>
              </MinuteHead>
              <Axis $h={19.7} $mt={-10}>
                {['30.14', '29.23', '28.31', '27.40', '26.49', '25.57', '4624', '3083', '1541'].map((t, i) => (
                  <Tick key={t} $c={i < 3 ? ICOL.up : i === 3 ? ICOL.mid : i < 6 ? ICOL.down : ICOL.vol}>{t}</Tick>
                ))}
              </Axis>
              <MinutePlot />
              <Axis $right $h={19.7} $mt={-10}>
                {['10.00%', '6.67%', '3.33%', '0.00%', '3.33%', '6.67%', '4624', '3083', '1541'].map((t, i) => (
                  <Tick key={i} $c={i < 3 ? ICOL.up : i === 3 ? ICOL.mid : i < 6 ? ICOL.down : ICOL.vol}>{t}</Tick>
                ))}
              </Axis>
              <span />
              <MacdCell>
                <MacdPlot />
                <MacdLabel>
                  <MacdItem $w={85}>M资金趋势(10)</MacdItem>
                  <MacdItem $w={59}>DIFF:0.09</MacdItem>
                  <MacdItem $w={57}>DEA:0.09</MacdItem>
                  <MacdItem $w={59}>MAC:0.01</MacdItem>
                  <MacdItem $w={33}>:0.06</MacdItem>
                  <MacdItem $w={28}>:0.09</MacdItem>
                </MacdLabel>
              </MacdCell>
              <Axis $right $h={19} $mt={15}>
                <Tick $c="#d8d8d8">0.45</Tick>
                <Tick $c="#d8d8d8">0.00</Tick>
              </Axis>
              <TimeRow $pl={0}>
                {t4(80.5).map(([t, w]) => <TimeCell key={t} $w={w}>{t}</TimeCell>)}
              </TimeRow>
            </MinutePanel>
            <FuturesPanel>
              <FutHead>
                <DropCell $pr={1}><DropBtn>▼</DropBtn></DropCell>
                <span />
                <Head $left>代码</Head>
              </FutHead>
              <FutRow>
                <Rank>1</Rank>
                <span />
                <Code $c="#e8e8dc">CF1309</Code>
              </FutRow>
              <FutTabRow>
                <FutTab>期货<TriUp>▲</TriUp></FutTab>
              </FutTabRow>
              <PieBox viewBox="0 0 128 90">
                {pieSlices.map(([a, b, c]) => <path key={a} d={sector(64.5, 45, 34.5, a, b)} fill={c} stroke="#222" strokeWidth={0.4} />)}
              </PieBox>
              <Legend>
                <LegendSide><span>买</span><span>入</span></LegendSide>
                <LegendRows>
                  {legendBuy.map(([k, c, v]) => (
                    <LegendRow key={k}><LegendKey>{k}</LegendKey><Swatch $c={c} /><LegendVal>{v}</LegendVal></LegendRow>
                  ))}
                </LegendRows>
                <LegendSide $top><span>卖</span><span>出</span></LegendSide>
                <LegendRows $top>
                  {legendSell.map(([k, c, v]) => (
                    <LegendRow key={k}><LegendKey>{k}</LegendKey><Swatch $c={c} /><LegendVal>{v}</LegendVal></LegendRow>
                  ))}
                </LegendRows>
              </Legend>
            </FuturesPanel>
          </MidRow>
          <BottomRow>
            <ListPanel>
              <ListHead rank={35} gap={10} pr={4} line={42} />
              <StockList data={hainan} rank={35} gap={10} codeColor="#e8e8a8" line={42} />
              <Grow />
              <ListTabs $pl={1}>
                <NavBtns>◄►</NavBtns>
                {listTabs.map(([t, w, k]) => <PanelTab key={t} $w={w} $kind={k}>{t}</PanelTab>)}
              </ListTabs>
            </ListPanel>
            <KPanel>
              <KCell>
                <Candles />
                <KHead>
                  <KHeadItem $w={157} $c="#d8d8d8">长信科技(日线 前复权) MA03</KHeadItem>
                  <KHeadItem $w={91} $c="#b83030">上涨家数: 35.00</KHeadItem>
                  <KHeadItem $w={99} $c="#3da048">下跌家数: 311.00</KHeadItem>
                  <KHeadItem $w={58} $c="#e8e8e8">M5: 26.13</KHeadItem>
                  <KHeadItem $c="#e8e8e8">M10: 25.</KHeadItem>
                </KHead>
                <Meter $w={90} $top={21} $bg="#f00a0a" $c="#e0a0a0">434</Meter>
                <Meter $w={113} $top={34} $bg="#033a12" $c="#d8e8d0">546</Meter>
                <ChartNote $l={135} $t={180} $c="#d8d8d8">16.22</ChartNote>
                <ChartNote $l={368} $t={33} $c="#d8d8d8">27.98</ChartNote>
                <ChartNote $l={1} $t={201} $c="#5a6a5a">用到未来数据</ChartNote>
              </KCell>
              <SideCell>
                <PriceAxis>
                  {kAxisLabels.map(t => <Tick key={t} $c={DIMRED}>{t}</Tick>)}
                </PriceAxis>
              </SideCell>
              <KCell $line>
                <VolPlot />
                <KHead>
                  <KHeadItem $w={102} $c="#d8d8d8">成交量V 万: 12.91</KHeadItem>
                  <KHeadItem $w={68} $c="#d8d8d8">预测: 12.91</KHeadItem>
                  <KHeadItem $w={60} $c="#b83030">主买: 2.00</KHeadItem>
                  <KHeadItem $w={67} $c="#2f9aa0">主卖: 10.91</KHeadItem>
                  <KHeadItem $w={88} $c="#a040c0">主力净买: -8.90</KHeadItem>
                  <KHeadItem $c="#1a28b0">持币: 27.98</KHeadItem>
                </KHead>
                <ChartNote $l={1} $t={20} $c="#f0e0a0">千股千评: 2013.4.2 超跌后有反弹，关注为主</ChartNote>
              </KCell>
              <SideCell $line>
                <VolAxis>
                  <Tick $c={DIMRED}>10000</Tick>
                  <X10>X10</X10>
                </VolAxis>
              </SideCell>
              <DateCell>
                <DateItem $w={108}>2013年</DateItem>
                <DateItem $w={128}>2</DateItem>
                <DateItem $w={179}>3</DateItem>
                <DateItem $w={30}>4</DateItem>
              </DateCell>
              <DayTag>日线</DayTag>
              <KButtons>
                {kButtons.map(([t, w, k]) => <KButton key={t} $w={w} $kind={k}>{t}</KButton>)}
              </KButtons>
            </KPanel>
            <QuotePanel>
              <QuoteTop>
                <PBadge>P</PBadge>
                <QuoteValue $c="#e8e860">300088</QuoteValue>
                <QuoteName>长信科技</QuoteName>
              </QuoteTop>
              <QuoteGroup $line>
                <QuoteRow $h={20}>
                  <QuoteCell><QuoteLabel>委比</QuoteLabel><QuoteValue $c={GREEN}>-100.00%</QuoteValue></QuoteCell>
                  <QuoteCell><QuoteLabel>委差</QuoteLabel><QuoteValue $c={GREEN}>-1732</QuoteValue></QuoteCell>
                </QuoteRow>
              </QuoteGroup>
              <QuoteGroup $line $h={97} $pt={1}>
                {quoteAsk.map(([l, p, v]) => (
                  <QuoteRow key={l}>
                    <QuoteCell><QuoteLabel>{l}</QuoteLabel><QuoteValue $c={GREEN}>{p}</QuoteValue></QuoteCell>
                    <QuoteCell><span /><QuoteValue $c="#d8c890">{v}</QuoteValue></QuoteCell>
                  </QuoteRow>
                ))}
              </QuoteGroup>
              <QuoteGroup $line $h={97} $pt={1}>
                {quoteBid.map(l => (
                  <QuoteRow key={l}><QuoteCell><QuoteLabel>{l}</QuoteLabel></QuoteCell></QuoteRow>
                ))}
              </QuoteGroup>
              <QuoteGroup $pt={2}>
                {quoteStats.map(s => (
                  <QuoteRow key={s[0]}>
                    <QuoteCell><QuoteLabel>{s[0]}</QuoteLabel><QuoteValue $c={s[2]}>{s[1]}</QuoteValue></QuoteCell>
                    <QuoteCell><QuoteLabel>{s[3]}</QuoteLabel><QuoteValue $c={s[5]}>{s[4]}</QuoteValue></QuoteCell>
                  </QuoteRow>
                ))}
              </QuoteGroup>
            </QuotePanel>
            <RightBlock>
              <TickerPanel>
                <TickerHead>
                  <HeadItem $w={30} $c="#40c0c8">全部</HeadItem>
                  <HeadItem $w={27}>300</HeadItem>
                  <HeadItem $w={56}>自选</HeadItem>
                  <HeadItem $w={28}>设置</HeadItem>
                  <HeadItem $w={30}>浮出</HeadItem>
                </TickerHead>
                {tickers.map((t, i) => (
                  <TickerRow key={i} $c={tickColors[t[3]]}>
                    <TickNum>14:59</TickNum>
                    <TickName>{t[0]}</TickName>
                    <TickName>{t[1]}</TickName>
                    <TickNum>{t[2]}</TickNum>
                  </TickerRow>
                ))}
              </TickerPanel>
              <WindPanel>
                <WindTitle>主力风向标 (2013年04月02日)</WindTitle>
                <GaugeBig viewBox="-39 -39 78 78"><GaugeArt outer={54} inner={60} /></GaugeBig>
                <GaugeLabel>当日</GaugeLabel>
                <SmallGauges>
                  <GaugeSmall viewBox="-39 -39 78 78"><GaugeArt outer={85} inner={85} /></GaugeSmall>
                  <GaugeSmall viewBox="-39 -39 78 78"><GaugeArt outer={92} inner={92} /></GaugeSmall>
                  <GaugeLabel>5日累计</GaugeLabel>
                  <GaugeLabel>60日累计</GaugeLabel>
                </SmallGauges>
                <FlowHead>
                  <span>万手</span><span>主动买</span><span>主动卖</span><span>主力买</span><span>主力卖</span>
                </FlowHead>
                {[['当日', '5.42', '7.40', '5.60', '7.05'], ['5日', '16.69', '19.00', '14.36', '16.16'], ['60日', '186.61', '187.09', '156.41', '154.10']].map(r => (
                  <FlowRow key={r[0]}>
                    <FlowLabel>{r[0]}</FlowLabel>
                    <FlowNum>{r[1]}</FlowNum><FlowNum>{r[2]}</FlowNum><FlowNum>{r[3]}</FlowNum><FlowNum>{r[4]}</FlowNum>
                  </FlowRow>
                ))}
              </WindPanel>
              <RadarPanel>
                <RadarTitle>
                  市场雷达
                  <RadarIcon viewBox="0 0 13 14">
                    <rect width="13" height="14" fill="#d8e4f4" stroke="#3060a0" />
                    <rect x="2" y="7" width="4" height="5" fill="#e06040" />
                    <rect x="7" y="3" width="4" height="9" fill="#40a060" />
                  </RadarIcon>
                </RadarTitle>
                <RadarHead>
                  <HeadItem $w={73}>时间</HeadItem>
                  <HeadItem $w={114}>名称</HeadItem>
                  <HeadItem $w={70}>价格</HeadItem>
                  <HeadItem $w={60}>信号</HeadItem>
                </RadarHead>
                <RadarRow>
                  <HeadItem $w={67} $c="#c8c8c8">07:01</HeadItem>
                  <HeadItem $w={145} $c="#e0e0e0"><TickName>机器人</TickName></HeadItem>
                  <HeadItem $w={33} $c={GREEN}>29.88</HeadItem>
                  <HeadItem $w={70} $c={GREEN}><TickName>封跌停板</TickName></HeadItem>
                </RadarRow>
              </RadarPanel>
            </RightBlock>
          </BottomRow>
        </Content>
      </Body>
      <StatusBar>
        <StatusIcon />
        {status.map((s, i) => (
          <StatusItem key={i} $w={s.w} $kind={s.k} $sep={s.sep}>{s.t}</StatusItem>
        ))}
        <StatusTray viewBox="0 0 101 18">
          <rect x="1" y="4" width="14" height="10" fill="#eee" stroke="#7a90a8" /><path d="M3 11h10" stroke="#e0a020" />
          <rect x="19" y="4" width="14" height="10" fill="#f4f4f4" stroke="#999" /><path d="M19 4l7 6 7-6" fill="none" stroke="#999" />
          <rect x="39" y="3" width="12" height="12" rx="3" fill="#e8d030" stroke="#807010" />
          <path d="M60 15l3-9 3 9zM58 4c2-2 8-2 10 0" fill="none" stroke="#888" />
          <path d="M77 2l5 5H72zM77 16l5-5H72z" fill="#c02020" /><path d="M72 11h10l-5 5z" fill="#20a030" />
          <rect x="95" y="5" width="2" height="6" fill="#999" />
        </StatusTray>
      </StatusBar>
      <TaskStrip>
        <TaskItem $w={42} $ml={25} />
        <TaskItem $w={41} $ml={4} />
        <TaskItem $w={41} $ml={235} />
      </TaskStrip>
      <Watermark>
        <WaterCn>股海网</WaterCn>
        <span>Www.Guhai.Com.CN</span>
      </Watermark>
      <LogoBox>
        <LogoTop>
          <LogoName>股海网</LogoName>
          <LogoTags>
            {'股票软件资源分享'.split('').map((c, i) => <LogoTag key={i}>{c}</LogoTag>)}
          </LogoTags>
        </LogoTop>
        <LogoUrl>Www.Guhai.com.cn</LogoUrl>
      </LogoBox>
    </Root>
  );
};

export default App;
